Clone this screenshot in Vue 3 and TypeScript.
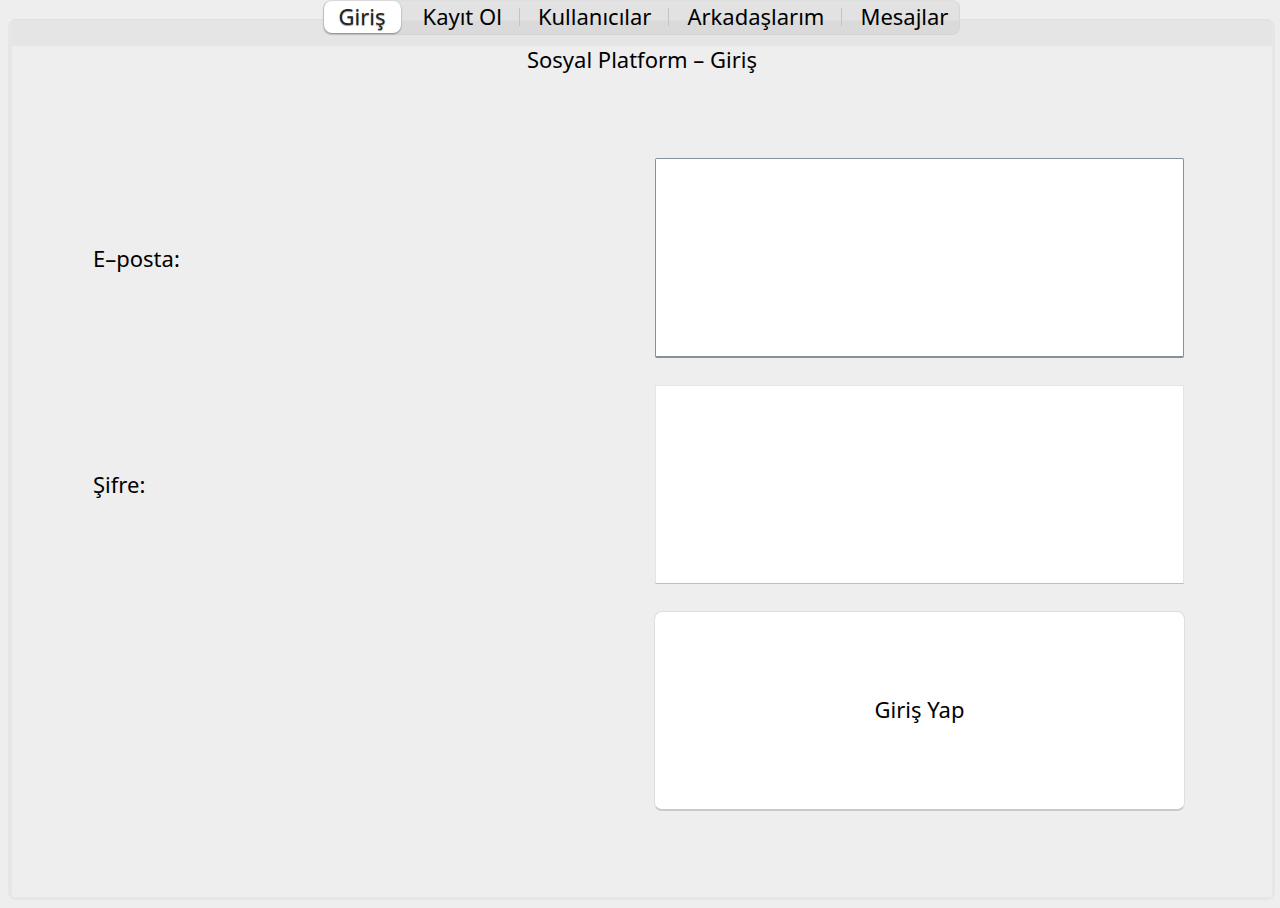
<script setup lang="ts">
import { ref } from 'vue'

const tabs: string[] = ['Giriş', 'Kayıt Ol', 'Kullanıcılar', 'Arkadaşlarım', 'Mesajlar']
const active = ref(0)
const email = ref('')
const password = ref('')
</script>

<template>
  <div class="window">
    <div class="tabs" role="tablist">
      <button
        v-for="(tab, i) in tabs"
        :key="tab"
        type="button"
        role="tab"
        class="tab"
        :class="{ active: i === active, divided: i > 0 && i < tabs.length - 1 }"
        :aria-selected="i === active"
        @click="active = i"
      >{{ tab }}</button>
    </div>
    <main class="panel">
      <div class="content">
        <h1 class="title">Sosyal Platform – Giriş</h1>
        <form class="form" @submit.prevent>
          <label for="email">E–posta:</label>
          <input id="email" v-model="email" class="field focused" type="text" />
          <label for="password">Şifre:</label>
          <input id="password" v-model="password" class="field" type="password" />
          <button class="submit" type="submit">Giriş Yap</button>
        </form>
      </div>
    </main>
  </div>
</template>

<style>
body {
  margin: 0;
  background: #eeeeee;
}
</style>

<style scoped>
.window {
  box-sizing: border-box;
  min-height: 100vh;
  display: flex;
  flex-direction: column;
  padding: 0 5px 8px 8px;
  background: #eeeeee;
  color: #000;
  font-family: "Noto Sans", "Open Sans", sans-serif;
  font-size: 22px;
  line-height: 26px;
}
.tabs {
  position: relative;
  z-index: 1;
  align-self: center;
  display: flex;
  box-sizing: border-box;
  height: 35px;
  border: 1px solid #d5d5d5;
  border-top-color: #dedede;
  border-radius: 8px;
  background: linear-gradient(#e2e2e2 0, #e2e2e2 19px, #dadada 20px, #dadada 100%);
}
.tab {
  position: relative;
  padding: 0 18px 4px;
  border: 0;
  background: none;
  color: inherit;
  font: inherit;
}
.tab:last-child {
  padding-right: 11px;
}
.tab.active {
  margin: 0 4px 1px 0;
  padding: 0 15px 2px;
  border-radius: 8px;
  background: #fff;
  box-shadow: 0 1px 2px rgba(0, 0, 0, 0.4);
  text-shadow: 0 1px 1px rgba(0, 0, 0, 0.4);
  color: #222;
}
.tab.divided::after {
  content: "";
  position: absolute;
  top: 7px;
  right: 0;
  width: 1px;
  height: 18px;
  background: #c4c4c4;
}
.panel {
  flex: 1;
  display: flex;
  margin-top: -16px;
  box-sizing: border-box;
  border: 3px solid #e6e6e6;
  border-top: 1px solid #dfdfdf;
  border-left-width: 4px;
  border-radius: 8px;
  background: #e5e5e5;
}
.content {
  flex: 1;
  display: flex;
  flex-direction: column;
  margin-top: 26px;
  background: #eeeeee;
}
.title {
  margin: 0;
  font: inherit;
  text-align: center;
}
.form {
  flex: 1;
  display: grid;
  grid-template-columns: 1fr 1fr;
  grid-template-rows: repeat(3, 1fr);
  gap: 27px 30px;
  padding: 86px 87px 86px 81px;
}
label {
  align-self: center;
}
.field {
  box-sizing: border-box;
  min-width: 0;
  margin: 0 1px;
  padding: 0 12px;
  border: 1px solid #e4e4e4;
  border-bottom-color: #bdbdbd;
  border-radius: 0;
  background: #fff;
  color: inherit;
  font: inherit;
  outline: none;
}
.field.focused {
  border-color: #84939f;
  border-bottom: 2px solid #84909a;
  border-radius: 2px;
}
.submit {
  grid-column: 2;
  padding: 0 0 4px;
  border: 1px solid #dedede;
  border-bottom: 2px solid #c8cac9;
  border-radius: 8px;
  background: #fff;
  color: inherit;
  font: inherit;
}
</style>
